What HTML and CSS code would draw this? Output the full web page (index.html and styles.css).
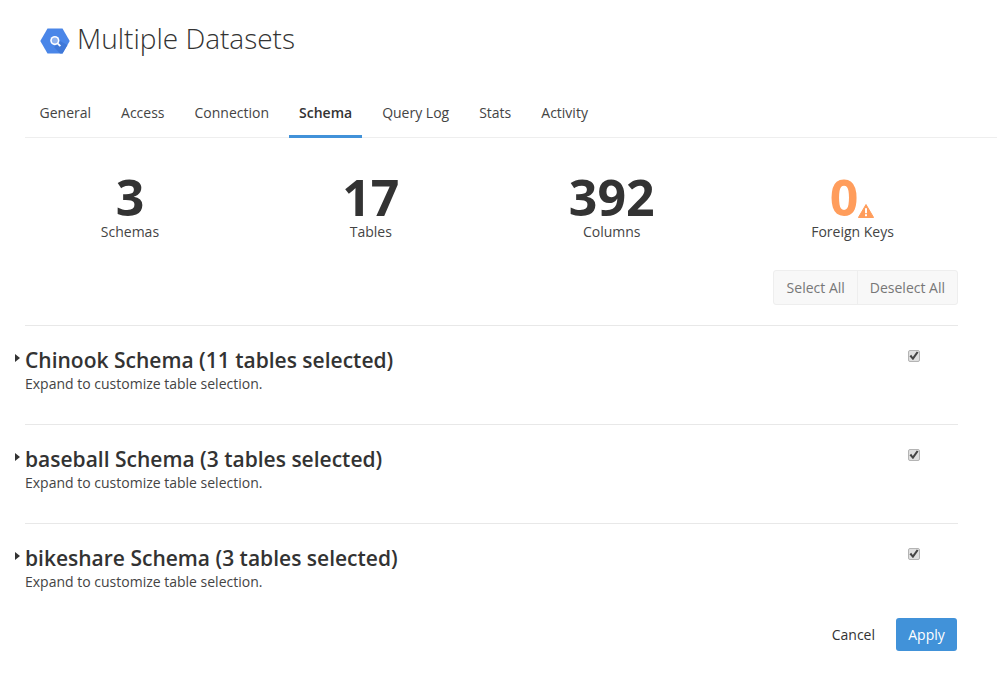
FILE: index.html
```html
<!DOCTYPE html>
<html lang="en">
<head>
<meta charset="utf-8">
<title>Multiple Datasets</title>
<link rel="stylesheet" href="styles.css">
</head>
<body>
<header class="title-row">
  <svg class="logo" viewBox="0 0 30 26" width="30" height="26" aria-hidden="true">
    <polygon points="7.5,0.5 22.5,0.5 29.7,13 22.5,25.5 7.5,25.5 0.3,13" fill="#4a86e8"/>
    <polygon points="18,15 20,13 27.5,17 22.5,25.5 20,25.5 14,19" fill="#3f78d8"/>
    <circle cx="14.8" cy="12.6" r="4.6" fill="#fff"/>
    <circle cx="14.8" cy="12.6" r="3" fill="#8fb2ee"/>
    <path d="M17.8 15.6 L20.4 18.2" stroke="#fff" stroke-width="1.8"/>
  </svg>
  <h1 class="title">Multiple Datasets</h1>
</header>
<nav class="tabs">
  <a class="tab">General</a>
  <a class="tab">Access</a>
  <a class="tab">Connection</a>
  <a class="tab active">Schema</a>
  <a class="tab">Query Log</a>
  <a class="tab">Stats</a>
  <a class="tab">Activity</a>
</nav>
<main class="content">
  <section class="stats">
    <div class="stat"><div class="num">3</div><div class="label">Schemas</div></div>
    <div class="stat"><div class="num">17</div><div class="label">Tables</div></div>
    <div class="stat"><div class="num">392</div><div class="label">Columns</div></div>
    <div class="stat warn">
      <div class="num"><span class="num-wrap">0<svg class="warn-icon" viewBox="0 0 16 14" width="16" height="14" aria-hidden="true"><path d="M8 0.5 L15.6 13.5 H0.4 Z" fill="#ff9d5c" stroke="#ff9d5c" stroke-linejoin="round"/><rect x="7" y="4.2" width="2" height="5" fill="#fff"/><rect x="7" y="10.2" width="2" height="2" fill="#fff"/></svg></span></div>
      <div class="label">Foreign Keys</div>
    </div>
  </section>
  <div class="actions">
    <div class="btn-group">
      <button class="group-btn">Select All</button>
      <button class="group-btn">Deselect All</button>
    </div>
  </div>
  <section class="schema">
    <span class="caret"></span>
    <div class="schema-text">
      <h2>Chinook Schema (11 tables selected)</h2>
      <p>Expand to customize table selection.</p>
    </div>
    <input class="check" type="checkbox" checked>
  </section>
  <section class="schema">
    <span class="caret"></span>
    <div class="schema-text">
      <h2>baseball Schema (3 tables selected)</h2>
      <p>Expand to customize table selection.</p>
    </div>
    <input class="check" type="checkbox" checked>
  </section>
  <section class="schema">
    <span class="caret"></span>
    <div class="schema-text">
      <h2>bikeshare Schema (3 tables selected)</h2>
      <p>Expand to customize table selection.</p>
    </div>
    <input class="check" type="checkbox" checked>
  </section>
  <footer class="footer">
    <a class="cancel">Cancel</a>
    <button class="apply">Apply</button>
  </footer>
</main>
</body>
</html>
```
FILE: styles.css
```css
html, body { margin: 0; padding: 0; background: #fff; }
body { font-family: "Open Sans", sans-serif; color: #333; width: 997px; height: 685px; overflow: hidden; font-size: 14px; }
.title-row { display: flex; align-items: center; padding: 20px 0 0 40px; height: 36px; gap: 7px; }
.logo { flex: none; margin-top: 5px; }
.title { margin: 0; font-weight: 300; font-size: 28px; line-height: 36px; color: #333; }
.tabs { display: flex; margin: 39px 0 0 25px; padding-left: 4.5px; height: 42px; border-bottom: 1px solid #eee; gap: 10px; align-items: stretch; }
.tab { display: block; padding: 6px 10px 0; font-size: 14px; line-height: 24px; color: #444; box-sizing: border-box; height: 43px; }
.tab.active { font-weight: 600; border-bottom: 3px solid #4192d9; color: #333; }
.content { width: 933px; margin-left: 25px; }
.stats { display: grid; grid-template-columns: repeat(4, 1fr); padding-top: 33px; margin-right: -15px; margin-left: -15.5px; }
.stat { text-align: center; }
.num { font-size: 50px; font-weight: 700; line-height: 52px; color: #333; white-space: nowrap; }
.label { font-size: 14px; line-height: 16px; margin-top: 1px; color: #444; }
.warn .num { color: #ff9d5c; }
.num-wrap { display: inline-block; position: relative; padding-right: 17px; }
.warn-icon { position: absolute; left: 28.5px; top: 33px; }
.actions { display: flex; justify-content: flex-end; margin-top: 30px; }
.btn-group { display: flex; height: 35px; border: 1px solid #eee; border-radius: 3px; background: #f8f8f8; box-sizing: border-box; }
.group-btn { font: 14px "Open Sans", sans-serif; color: #777; background: none; border: 0; padding: 0 12px; height: 33px; }
.group-btn:first-child { padding-left: 13px; }
.group-btn + .group-btn { border-left: 1px solid #eee; }
.schema { position: relative; border-top: 1px solid #e8e8e8; height: 98px; display: flex; justify-content: space-between; }
.actions + .schema { margin-top: 20px; }
.caret { position: absolute; left: -10px; top: 28px; width: 0; height: 0; border-left: 5px solid #333; border-top: 4px solid transparent; border-bottom: 4px solid transparent; }
.schema-text { padding-top: 20px; }
.schema h2 { margin: 0; font-size: 21px; font-weight: 600; line-height: 28px; color: #333; }
.schema p { margin: 0; font-size: 14px; line-height: 19px; color: #444; }
.check { appearance: none; position: relative; box-sizing: border-box; margin: 24px 38px 0 0; width: 12px; height: 12px; background: #dfdfdf; border: 1px solid #b4b4b4; border-radius: 2px; }
.check::after { content: ""; position: absolute; left: 0; top: 0; width: 10px; height: 10px; background: #444; clip-path: polygon(5% 52%, 22% 38%, 38% 60%, 78% 5%, 95% 15%, 40% 92%); }
.footer { display: flex; justify-content: flex-end; align-items: center; gap: 21px; margin-top: -4px; margin-right: 1px; }
.cancel { font-size: 14px; color: #333; }
.apply { font: 14px "Open Sans", sans-serif; color: #fff; background: #4192d9; border: 0; border-radius: 3px; width: 61px; height: 33px; padding: 0; }
```
